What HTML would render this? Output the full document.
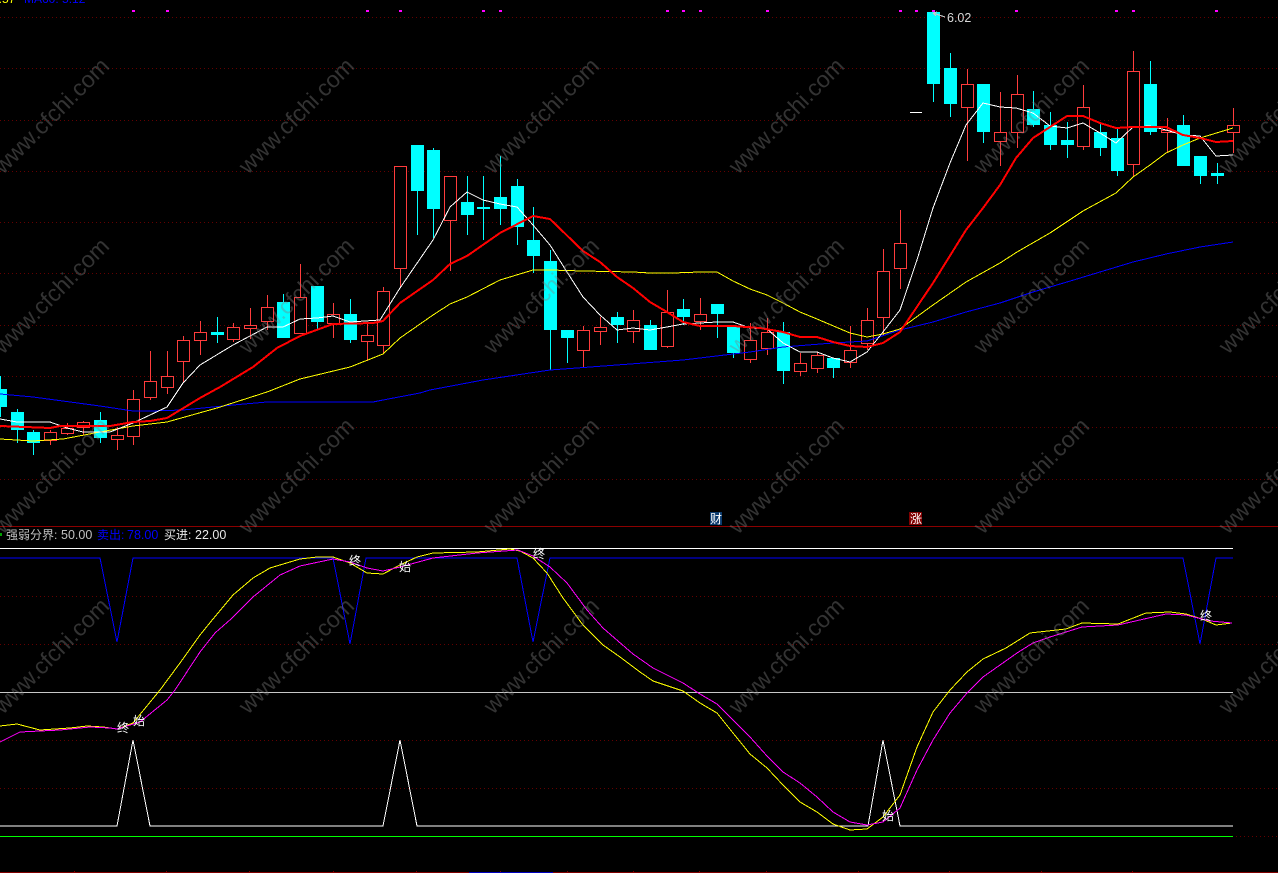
<!DOCTYPE html>
<html lang="zh">
<head>
<meta charset="utf-8">
<title>K线图</title>
<style>
html,body{margin:0;padding:0;background:#000;width:1278px;height:873px;overflow:hidden}
svg{display:block;position:absolute;left:0;top:0}
text{font-family:"Liberation Sans","Noto Sans CJK SC",sans-serif;font-size:12px}
.n{font-size:12.5px}
.ln{fill:none;shape-rendering:crispEdges}
.lb{fill:#fff;font-size:12px;font-family:"WenQuanYi Zen Hei","Noto Sans CJK SC",sans-serif}
.wm text{font-size:23px;fill:rgba(128,128,128,.40)}
</style>
</head>
<body>
<svg width="1278" height="873" viewBox="0 0 1278 873" xmlns="http://www.w3.org/2000/svg">
<defs>
<pattern id="d" width="4" height="1" patternUnits="userSpaceOnUse"><rect width="1" height="1" fill="#640000"/></pattern>
</defs>
<rect width="1278" height="873" fill="#000"/>

<!-- grid -->
<g fill="url(#d)" shape-rendering="crispEdges">
<rect y="17" width="1278" height="1"/>
<rect y="68" width="1278" height="1"/>
<rect y="120" width="1278" height="1"/>
<rect y="171" width="1278" height="1"/>
<rect y="222" width="1278" height="1"/>
<rect y="273" width="1278" height="1"/>
<rect y="325" width="1278" height="1"/>
<rect y="376" width="1278" height="1"/>
<rect y="427" width="1278" height="1"/>
<rect y="479" width="1278" height="1"/>
<rect y="596" width="1278" height="1"/>
<rect y="644" width="1278" height="1"/>
<rect y="740" width="1278" height="1"/>
<rect y="788" width="1278" height="1"/>
<rect y="836" width="1278" height="1"/>
</g>

<!-- top clipped labels -->
<text x="-8" y="3" fill="#ffff00">7.57</text>
<text x="24" y="3" fill="#0000ff">MA60: 5.12</text>

<!-- magenta signals -->
<path fill="#ff00ff" d="M132 10h3v2h-3zM166 10h3v2h-3zM366 10h3v2h-3zM399 10h3v2h-3zM482 10h3v2h-3zM499 10h3v2h-3zM666 10h3v2h-3zM682 10h3v2h-3zM699 10h3v2h-3zM766 10h3v2h-3zM899 10h3v2h-3zM915 10h3v2h-3zM932 10h3v2h-3zM1015 10h3v2h-3zM1115 10h3v2h-3zM1132 10h3v2h-3zM1215 10h3v2h-3z"/>

<!-- cyan wicks -->
<path class="ln" stroke="#00ffff" d="M0.5 376V417M17.5 409V443M33.5 430V455M100.5 412V443M217.5 317V343M283.5 294V338M317.5 286V329M350.5 299V343M417.5 145V235M433.5 148V238M467.5 176V235M483.5 176V240M500.5 156V225M517.5 179V245M533.5 207V273M550.5 250V370M567.5 330V363M617.5 312V343M650.5 320V350M683.5 299V325M717.5 304V338M733.5 327V358M783.5 322V384M833.5 358V378M933.5 12V102M950.5 53V117M983.5 84V143M1033.5 91V127M1050.5 112V150M1067.5 122V158M1100.5 124V156M1117.5 129V176M1150.5 61V135M1183.5 115V166M1200.5 156V184M1217.5 163V184"/>
<!-- cyan bodies -->
<path fill="#00ffff" d="M-6 389h13v18h-13zM11 412h13v18h-13zM27 432h13v11h-13zM94 420h13v18h-13zM211 332h13v3h-13zM277 302h13v36h-13zM311 286h13v36h-13zM344 314h13v26h-13zM411 145h13v46h-13zM427 150h13v59h-13zM461 202h13v13h-13zM477 207h13v2h-13zM494 197h13v12h-13zM511 186h13v41h-13zM527 240h13v16h-13zM544 261h13v69h-13zM561 330h13v8h-13zM611 317h13v8h-13zM644 325h13v25h-13zM677 309h13v8h-13zM711 304h13v10h-13zM727 327h13v26h-13zM777 332h13v39h-13zM827 358h13v10h-13zM927 12h13v72h-13zM944 68h13v36h-13zM977 84h13v48h-13zM1027 109h13v16h-13zM1044 125h13v20h-13zM1061 140h13v5h-13zM1094 132h13v16h-13zM1111 138h13v33h-13zM1144 84h13v48h-13zM1177 125h13v41h-13zM1194 156h13v20h-13zM1211 173h13v3h-13z"/>

<!-- red wicks -->
<path class="ln" stroke="#ff3c3c" d="M50.5 430V445M67.5 423V435M83.5 421V435M117.5 427V450M133.5 390V445M150.5 351V400M167.5 351V394M183.5 336V383M200.5 321V355M233.5 323V342M250.5 308V339M267.5 295V330M300.5 264V333M333.5 303V338M367.5 322V361M383.5 287V353M400.5 166V287M450.5 176V271M583.5 326V368M600.5 317V345M633.5 310V343M667.5 290V348M700.5 298V330M750.5 323V363M767.5 318V355M800.5 353V376M817.5 352V373M850.5 326V368M867.5 308V350M883.5 249V335M900.5 210V289M967.5 69V161M1000.5 92V166M1017.5 75V148M1083.5 85V150M1133.5 51V176M1167.5 118V153M1233.5 108V153"/>
<!-- red hollow bodies -->
<path class="ln" style="fill:#000" stroke="#ff3c3c" d="M44.5 432.5h12v8h-12zM61.5 428.5h12v5h-12zM77.5 422.5h12v5h-12zM111.5 435.5h12v4h-12zM127.5 399.5h12v37h-12zM144.5 381.5h12v16h-12zM161.5 376.5h12v11h-12zM177.5 340.5h12v21h-12zM194.5 332.5h12v8h-12zM227.5 327.5h12v12h-12zM244.5 325.5h12v3h-12zM261.5 307.5h12v14h-12zM294.5 297.5h12v36h-12zM327.5 314.5h12v9h-12zM361.5 335.5h12v6h-12zM377.5 291.5h12v54h-12zM394.5 166.5h12v102h-12zM444.5 176.5h12v44h-12zM577.5 330.5h12v20h-12zM594.5 327.5h12v4h-12zM627.5 320.5h12v11h-12zM661.5 312.5h12v34h-12zM694.5 314.5h12v7h-12zM744.5 340.5h12v19h-12zM761.5 332.5h12v16h-12zM794.5 363.5h12v8h-12zM811.5 355.5h12v13h-12zM844.5 350.5h12v12h-12zM861.5 320.5h12v23h-12zM877.5 271.5h12v46h-12zM894.5 243.5h12v25h-12zM961.5 84.5h12v23h-12zM994.5 132.5h12v9h-12zM1011.5 94.5h12v38h-12zM1077.5 107.5h12v39h-12zM1127.5 71.5h12v93h-12zM1161.5 130.5h12v2h-12zM1227.5 125.5h12v7h-12z"/>
<!-- flat doji -->
<path class="ln" stroke="#fff" d="M910 112.5H922"/>

<!-- MA60 blue -->
<polyline class="ln" stroke="#0000ff" points="0,394 33,397 100,406 133,411 150,411 183,410 233,405 267,402 293,402 373,402 383,400 420,393 430,390 483,380 550,370 617,365 683,360 750,352 783,347 833,343 867,341 900,330 933,322 966,312 1000,303 1033,292 1067,282 1100,272 1133,262 1166,254 1200,247 1233,242"/>
<!-- MA20 yellow -->
<polyline class="ln" stroke="#ffff00" points="0,439 33,441 63,439 100,432 133,426 167,422 217,408 267,392 300,379 350,367 383,354 400,338 433,315 450,304 467,297 500,280 533,270 550,270 583,271 633,272 650,273 673,273 700,272 717,272 733,281 750,289 767,295 783,303 800,312 817,319 850,333 867,337 883,334 900,329 933,305 966,282 1000,263 1017,252 1050,233 1083,211 1116,193 1133,177 1150,165 1166,153 1183,145 1200,138 1233,128"/>
<!-- MA5 white -->
<polyline class="ln" stroke="#fff" points="0,419 17,422 50,422 67,428 83,432 110,432 133,423 167,407 183,383 200,365 233,345 267,327 283,327 300,319 317,318 333,316 350,322 380,320 400,288 433,240 450,207 467,192 483,200 500,204 517,207 533,225 550,245 567,272 583,297 600,315 617,330 633,328 650,330 667,327 683,324 717,322 733,322 750,328 767,329 783,343 800,352 817,352 833,358 850,362 867,352 883,332 900,310 917,260 933,208 950,163 966,125 983,103 1000,107 1016,108 1033,113 1050,126 1067,128 1083,123 1100,133 1116,143 1133,127 1150,126 1166,130 1183,135 1200,136 1216,156 1233,155"/>
<!-- MA10 red -->
<polyline class="ln" stroke="#ff0000" stroke-width="2" points="0,426 25,427 50,428 60,426 110,426 133,422 150,421 167,418 200,398 220,387 253,367 277,348 300,336 333,324 373,323 383,321 400,303 433,280 450,264 467,256 500,233 533,216 550,219 583,251 600,262 617,277 633,288 650,302 667,312 683,322 700,326 733,326 760,328 783,332 800,337 817,337 833,342 850,346 867,347 883,343 900,332 933,283 966,230 983,208 1000,185 1016,158 1033,138 1050,127 1067,116 1083,116 1100,123 1116,128 1133,127 1166,127 1183,135 1200,138 1216,142 1233,141"/>

<!-- high label -->
<path class="ln" stroke="#c8c8c8" d="M933 13L945 17M933 13L937 12M933 13L936 16"/>
<text class="n" x="947" y="22" fill="#d8d8d8">6.02</text>

<!-- news tags -->
<rect x="710" y="512" width="12" height="13" fill="#0a3a6e"/>
<text x="710" y="523" fill="#fff" style="font-size:12px">财</text>
<rect x="909" y="512" width="13" height="13" fill="#800000"/>
<text x="910" y="523" fill="#fff" style="font-size:12px">涨</text>

<!-- pane divider -->
<path class="ln" stroke="#8b0000" d="M0 526.5H1278"/>

<!-- indicator header -->
<rect x="0" y="533" width="2" height="3" fill="#00a000"/>
<text x="6" y="539" fill="#c0c0c0">强弱分界:</text><text class="n" x="61" y="539" fill="#c0c0c0">50.00</text>
<text x="97" y="539" fill="#0000ff">卖出:</text><text class="n" x="127" y="539" fill="#0000ff">78.00</text>
<text x="164" y="539" fill="#e8e8e8">买进:</text><text class="n" x="195" y="539" fill="#e8e8e8">22.00</text>

<!-- indicator levels -->
<path class="ln" stroke="#fff" d="M0 548.5H1233"/>
<path class="ln" stroke="#c8c8c8" d="M0 692.5H1233"/>
<path class="ln" stroke="#00ff00" d="M0 836.5H1233"/>

<!-- sell line blue -->
<polyline class="ln" stroke="#0000ff" points="0,558 100,558 117,642 133,558 333,558 350,644 366,558 517,558 533,642 550,558 1183,558 1200,644 1216,558 1233,558"/>
<!-- buy line white -->
<polyline class="ln" stroke="#fff" points="0,826 117,826 133,740 150,826 383,826 400,740 417,826 868,826 883,740 900,826 1233,826"/>

<!-- oscillator yellow -->
<polyline class="ln" stroke="#ffff00" points="0,726 17,724 40,730 70,728 87,726 103,727 117,729 133,723 160,690 180,663 200,635 213,619 233,595 253,578 270,568 300,559 317,557 333,557 350,563 367,573 383,574 400,565 417,557 433,553 477,552 510,549 520,551 533,558 547,573 563,598 583,625 603,645 620,657 640,672 653,681 683,691 700,703 717,713 733,733 750,754 767,768 783,785 800,802 817,812 833,824 850,830 867,829 883,817 900,795 917,747 933,712 950,690 967,672 983,659 1006,648 1030,633 1066,629 1082,623 1118,624 1146,613 1170,612 1186,614 1202,619 1216,625 1232,623"/>
<!-- oscillator magenta -->
<polyline class="ln" stroke="#ff00ff" points="0,742 20,732 60,730 90,727 110,728 117,729 140,722 167,700 175,690 200,652 215,633 231,619 253,597 280,575 300,566 333,559 350,562 367,568 383,571 400,567 433,558 477,553 518,550 533,556 550,567 567,583 587,610 603,628 633,654 653,668 683,683 700,694 717,704 733,720 750,737 767,756 783,772 800,783 817,797 833,812 850,822 867,825 883,822 900,808 917,770 933,740 950,713 967,693 983,677 1000,665 1017,653 1033,643 1050,637 1082,627 1118,625 1166,614 1186,615 1210,621 1232,623"/>

<!-- start / end markers -->
<text class="lb" x="117" y="732">终</text>
<text class="lb" x="133" y="725">始</text>
<text class="lb" x="349" y="565">终</text>
<text class="lb" x="399" y="571">始</text>
<text class="lb" x="533" y="558">终</text>
<text class="lb" x="882" y="820">始</text>
<text class="lb" x="1200" y="620">终</text>

<!-- bottom axis -->
<path class="ln" stroke="#800000" d="M0 872.5H1278M74.5 871V873M166.5 871V873M249.5 871V873M333.5 871V873M416.5 871V873M500.5 871V873M567.5 871V873M633.5 871V873M699.5 871V873M766.5 871V873M858.5 871V873M949.5 871V873M1041.5 871V873M1132.5 871V873"/>
<path class="ln" stroke="#0000c0" d="M469 872.5H553"/>

<!-- watermarks -->
<g class="wm">
<text transform="translate(3 175) rotate(-45)">www.cfchi.com</text>
<text transform="translate(248 175) rotate(-45)">www.cfchi.com</text>
<text transform="translate(493 175) rotate(-45)">www.cfchi.com</text>
<text transform="translate(738 175) rotate(-45)">www.cfchi.com</text>
<text transform="translate(983 175) rotate(-45)">www.cfchi.com</text>
<text transform="translate(1228 175) rotate(-45)">www.cfchi.com</text>
<text transform="translate(3 355) rotate(-45)">www.cfchi.com</text>
<text transform="translate(248 355) rotate(-45)">www.cfchi.com</text>
<text transform="translate(493 355) rotate(-45)">www.cfchi.com</text>
<text transform="translate(738 355) rotate(-45)">www.cfchi.com</text>
<text transform="translate(983 355) rotate(-45)">www.cfchi.com</text>
<text transform="translate(1228 355) rotate(-45)">www.cfchi.com</text>
<text transform="translate(3 535) rotate(-45)">www.cfchi.com</text>
<text transform="translate(248 535) rotate(-45)">www.cfchi.com</text>
<text transform="translate(493 535) rotate(-45)">www.cfchi.com</text>
<text transform="translate(738 535) rotate(-45)">www.cfchi.com</text>
<text transform="translate(983 535) rotate(-45)">www.cfchi.com</text>
<text transform="translate(1228 535) rotate(-45)">www.cfchi.com</text>
<text transform="translate(3 715) rotate(-45)">www.cfchi.com</text>
<text transform="translate(248 715) rotate(-45)">www.cfchi.com</text>
<text transform="translate(493 715) rotate(-45)">www.cfchi.com</text>
<text transform="translate(738 715) rotate(-45)">www.cfchi.com</text>
<text transform="translate(983 715) rotate(-45)">www.cfchi.com</text>
<text transform="translate(1228 715) rotate(-45)">www.cfchi.com</text>
</g>
</svg>
</body>
</html>
